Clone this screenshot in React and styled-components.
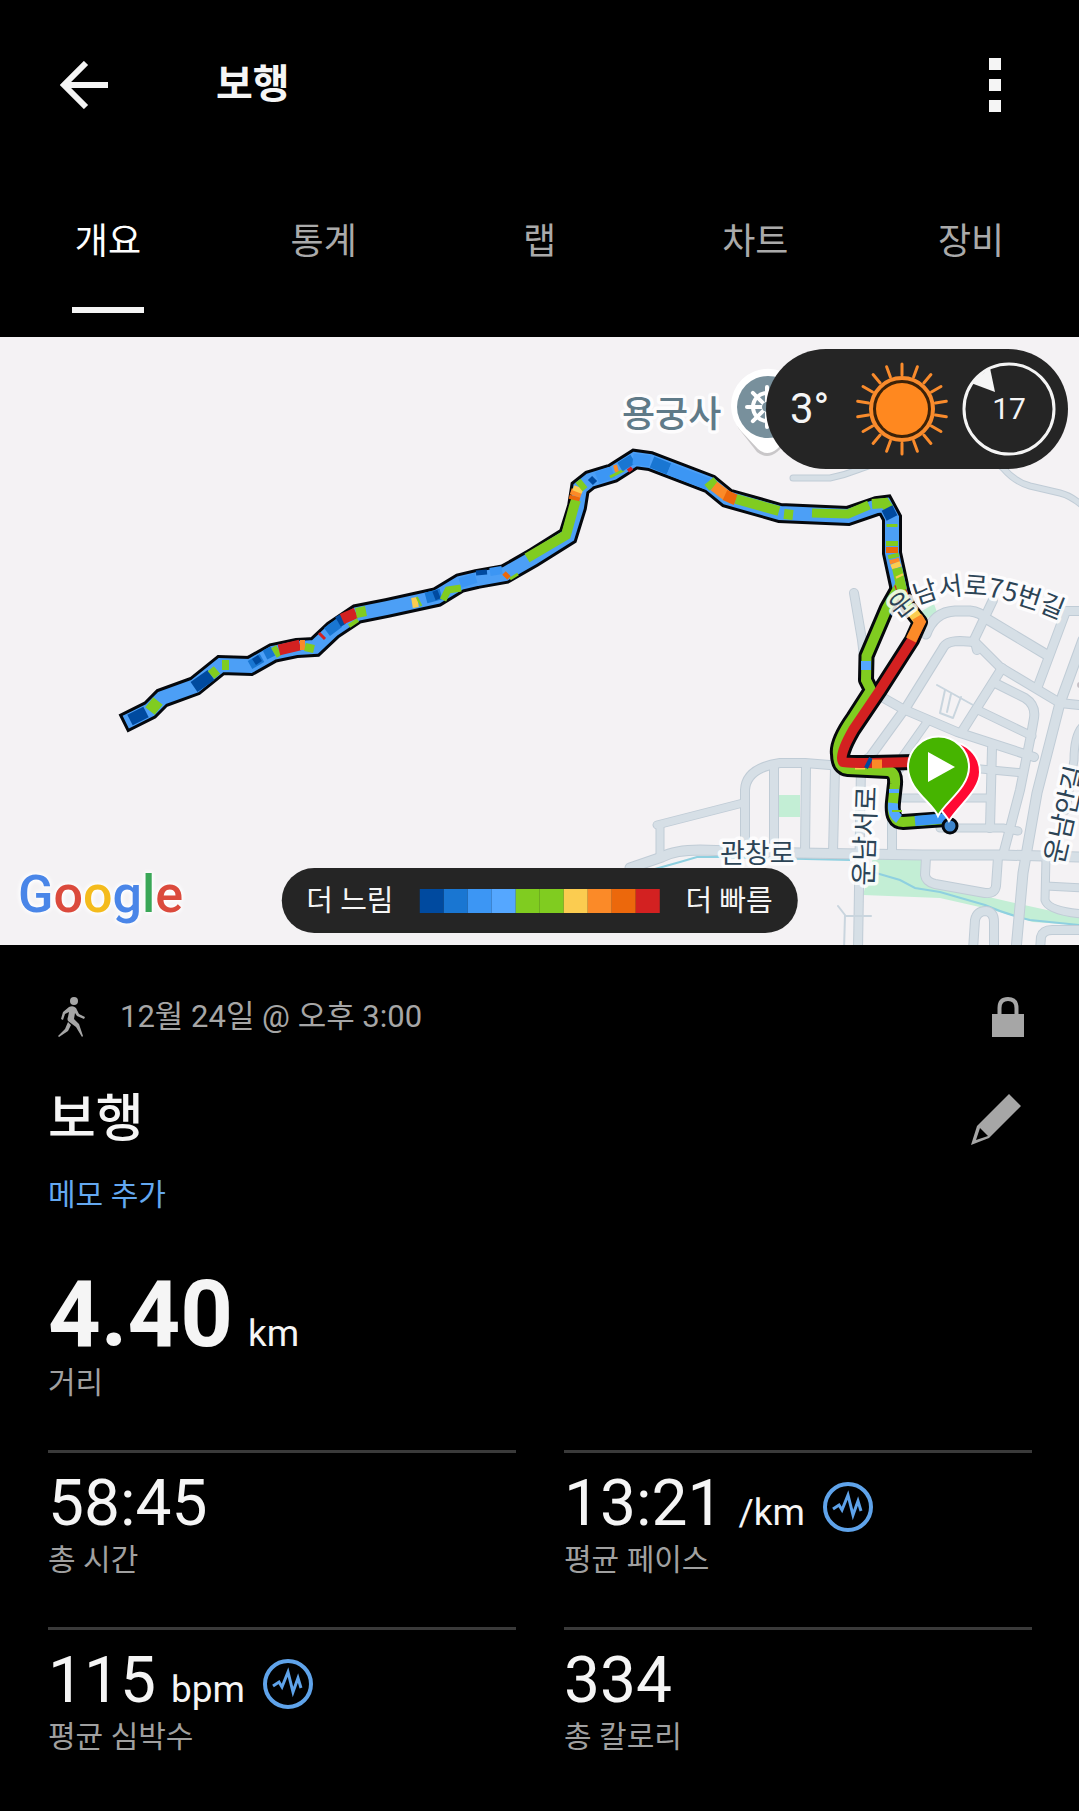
import React from "react";
import styled, { createGlobalStyle } from "styled-components";

const GlobalStyle = createGlobalStyle`
  *, *::before, *::after { box-sizing: border-box; }
  body {
    margin: 0;
    background: #000;
    color: #f5f5f5;
    font-family: Roboto, "Noto Sans CJK KR", sans-serif;
  }
  button {
    border: 0;
    padding: 0;
    background: none;
    color: inherit;
    font: inherit;
    cursor: pointer;
  }
  svg { display: block; }
`;

const Screen = styled.main`
  min-height: 100vh;
  background: #000;
`;

const Header = styled.header`
  display: flex;
  align-items: center;
  height: 170px;
  padding: 0 48px;
`;

const IconButton = styled.button`
  display: flex;
  align-items: center;
  justify-content: ${(p) => p.$align || "center"};
  width: 72px;
  height: 72px;
  color: ${(p) => p.$color || "#f5f5f5"};
`;

const HeaderTitle = styled.h1`
  flex: 1;
  margin: 0 0 0 96px;
  font-size: 40px;
  line-height: 56px;
  font-weight: 700;
`;

const Tabs = styled.nav`
  display: grid;
  grid-template-columns: repeat(5, 1fr);
  height: 167px;
`;

const Tab = styled.button`
  display: flex;
  flex-direction: column;
  align-items: center;
  justify-content: space-between;
  padding: 46px 0 24px;
  && {
    color: ${(p) => (p.$active ? "#fff" : "#aaa")};
    font-size: 36px;
    line-height: 52px;
  }
  &::after {
    content: "";
    width: 72px;
    height: 6px;
    background: ${(p) => (p.$active ? "#f5f5f5" : "transparent")};
  }
`;

const MapPanel = styled.section`
  position: relative;
  height: 608px;
  overflow: hidden;
  background: #f4f2f4;
`;

const MapCanvas = styled.svg`
  width: 100%;
  height: 100%;
`;

const MapText = styled.text`
  font-family: "Noto Sans CJK KR", sans-serif;
  font-size: ${(p) => p.$size || 27}px;
  font-weight: ${(p) => p.$weight || 400};
  fill: ${(p) => p.$color || "#2c4456"};
  stroke: rgba(255, 255, 255, 0.85);
  stroke-width: 7px;
  stroke-linejoin: round;
  paint-order: stroke;
`;

const WeatherPill = styled.div`
  position: absolute;
  top: 12px;
  right: 11px;
  display: flex;
  align-items: center;
  height: 120px;
  padding: 0 12px 0 24px;
  border-radius: 60px;
  background: #252525;
`;

const Temperature = styled.span`
  width: 64px;
  font-size: 42px;
  line-height: 48px;
`;

const Wind = styled.div`
  display: grid;
  place-items: center;
  margin-left: 12px;
  font-size: 30px;
  line-height: 36px;
  & > * { grid-area: 1 / 1; }
`;

const LegendPill = styled.div`
  position: absolute;
  bottom: 12px;
  left: 50%;
  transform: translateX(-50%);
  display: flex;
  align-items: center;
  gap: 26px;
  height: 65px;
  padding: 0 25px;
  border-radius: 33px;
  background: #252525;
  font-size: 29px;
  line-height: 40px;
  white-space: nowrap;
`;

const Scale = styled.div`
  display: flex;
`;

const Swatch = styled.span`
  width: 24px;
  height: 24px;
  background: ${(p) => p.$color};
`;

const GoogleMark = styled.span`
  position: absolute;
  left: 18px;
  bottom: 20px;
  font-size: 52px;
  line-height: 60px;
  font-weight: 500;
  filter: drop-shadow(0 0 2px #fff) drop-shadow(0 0 2px #fff);
`;

const Letter = styled.span`
  color: ${(p) => p.$color};
`;

const Details = styled.section`
  display: flex;
  flex-direction: column;
  padding: 48px 47px 48px 48px;
`;

const MetaRow = styled.div`
  display: flex;
  align-items: center;
  justify-content: space-between;
  height: 48px;
  color: #a6a6a6;
`;

const When = styled.div`
  display: flex;
  align-items: center;
  gap: 24px;
  font-size: 31px;
  line-height: 40px;
`;

const TitleRow = styled.div`
  display: flex;
  align-items: center;
  justify-content: space-between;
  margin-top: 47px;
  height: 64px;
`;

const ActivityTitle = styled.h2`
  margin: 0;
  font-size: 52px;
  line-height: 64px;
  font-weight: 500;
`;

const NoteLink = styled.a`
  align-self: flex-start;
  margin-top: 23px;
  color: #64a8f0;
  font-size: 30px;
  line-height: 40px;
  text-decoration: none;
`;

const Primary = styled.div`
  margin: 52px 0 47px;
`;

const Value = styled.div`
  display: flex;
  align-items: baseline;
  font-size: ${(p) => (p.$large ? 92 : 64)}px;
  line-height: ${(p) => (p.$large ? 96 : 72)}px;
  font-weight: ${(p) => (p.$large ? 700 : 400)};
`;

const Unit = styled.span`
  margin-left: 15px;
  font-size: 37px;
  line-height: 40px;
  font-weight: 400;
`;

const Label = styled.div`
  color: #a0a0a0;
  font-size: 30px;
  line-height: 40px;
`;

const Grid = styled.div`
  display: grid;
  grid-template-columns: 1fr 1fr;
  gap: 47px 48px;
`;

const Metric = styled.div`
  border-top: 3px solid #3a3a3a;
  padding-top: 15px;
`;

const PulseButton = styled.button`
  align-self: center;
  margin: 6px 0 0 18px;
`;

const speedColors = [
  "#004a9f", "#1976d2", "#3c96f4", "#55a7ff", "#80cc20",
  "#80cc20", "#fbcc50", "#fb8a28", "#ec680c", "#d32121",
];
const [NAVY, BLUE, AZURE, SKY, GREEN, , YELLOW, ORANGE, RUST, RED] = speedColors;

const roads = [
  ["M854 593L862 640L868 690", 8],
  ["M657 825L743 803", 7],
  ["M745 851V790Q746 768 780 763H805L842 766L900 768", 8],
  ["M774 766V850", 8],
  ["M806 766L805 853", 8],
  ["M835 768L833 853", 8],
  ["M660 825V857", 7],
  ["M630 868L662 857Q675 850 700 850L800 853L923 855H1003L1079 857", 9],
  ["M858 950L861 766Q864 760 870 757L907 706L943 648Q946 641 960 641L975 642L1000 667L1060 703L1079 705", 8],
  ["M926 634Q934 612 955 611H970Q980 612 987 619L1047 655", 9],
  ["M993 600L973 642", 8],
  ["M975 642L977 650", 8],
  ["M1079 611H1066L1038 686", 8],
  ["M880 696L903 709L957 732L1034 757", 8],
  ["M1002 668L961 733", 8],
  ["M995 683L1025 698Q1036 705 1034 718L1031 735L1020 790L1003 855", 8],
  ["M978 710L1032 736", 7],
  ["M1083 640L1060 703L1037 793L1023 873L1016 950", 9],
  ["M927 722L903 756", 7],
  ["M992 748L990 828", 8],
  ["M893 798H990", 7],
  ["M940 828H1003L1018 831", 7],
  ["M970 768L1023 773", 7],
  ["M892 822V855", 8],
  ["M926 857L925 875Q926 882 935 884L985 893Q995 894 996 886L998 857", 8],
  ["M973 950L975 920Q977 911 986 911Q994 912 994 922V950", 8],
  ["M1046 857L1045 900Q1048 911 1083 914", 7],
  ["M1046 886L1083 888", 7],
  ["M1040 950L1041 937Q1043 930 1052 930H1083", 8],
  ["M1083 726Q1074 735 1074 760L1066 810", 7],
  ["M793 478H830Q845 475 860 469L880 462", 5],
  ["M990 458L1003 468Q1015 482 1030 486L1060 493Q1072 496 1084 507", 5],
];

const lanes = [
  "M937 685L973 705", "M945 690L940 713L953 718L961 697",
  "M951 694L947 712", "M838 906L845 915L844 950", "M845 916H871",
];

const track =
  "M132 719L150 710L162 698L195 686L221 665L250 666L273 653L297 648L315 647L333 630L357 614L387 608L437 597L460 583L477 579L505 574L533 558L568 536L577 507L580 488L590 480L613 473L635 459L650 461L710 484L727 498L780 513L848 516L877 506L885 505L892 518L892 553L900 590";
const greenLeg = "M900 585L887 608L866.500 656L866 680L871 690L853 718Q836 742 838 754Q838 768 848 769L888 771Q896 772 895 784L893 802Q891 822 903 822L946 819";
const redLeg = "M899 584L908 607L920 622L912 640L880 690L853 730Q838 756 843 762Q846 763 873 763L915 762";

const trackParts = [
  [NAVY, "M130 720L146 712", 12], [GREEN, "M150 711L158 701", 12],
  [NAVY, "M194 687L211 675", 12], [GREEN, "M211 675L217 670", 10],
  [GREEN, "M222 665H229", 10], [BLUE, "M250 665L262 658", 9], [NAVY, "M254 662L260 658", 7],
  [BLUE, "M265 655L273 651", 10], [GREEN, "M274 653L279 650", 11],
  [RED, "M279 650L300 645", 11], [ORANGE, "M300 645L305 645", 10], [GREEN, "M305 647L314 649", 8],
  [RED, "M319 633L325 639", 3], [BLUE, "M327 632L339 623", 10], [NAVY, "M338 622L343 619", 11],
  [RED, "M342 619L356 613", 11], [GREEN, "M356 613L366 611", 10], [GREEN, "M349 626L358 620", 4],
  [YELLOW, "M412 603L418 602", 10], [GREEN, "M418 602L420 601", 10],
  [BLUE, "M426 598L441 594", 11], [NAVY, "M434 596L439 594", 9],
  [GREEN, "M443 600L448 590L461 588", 7], [AZURE, "M460 583L476 578", 10],
  [NAVY, "M476 573L487 572", 5], [AZURE, "M490 572L502 570", 8],
  [RUST, "M504 573L509 578", 5], [GREEN, "M510 579L518 574", 3],
  [GREEN, "M527 558L566 535L574 506L576 500", 10],
  [RUST, "M574 500L575 496", 11], [ORANGE, "M575 496L577 490", 11], [YELLOW, "M577 492L579 487", 10],
  [GREEN, "M579 487L584 483", 11], [NAVY, "M590 478L595 483", 6],
  [AZURE, "M597 478L613 472", 12], [ORANGE, "M615 465L617 472", 4], [GREEN, "M610 477L624 470", 3],
  [BLUE, "M620 467L633 459", 10], [RED, "M628 471L632 468", 4],
  [AZURE, "M633 459L650 461", 11], [BLUE, "M652 462L669 469", 12], [AZURE, "M669 469L708 484", 12],
  [GREEN, "M709 481L714 487", 12], [ORANGE, "M714 486L727 496", 11], [RUST, "M725 495L736 500", 11],
  [GREEN, "M736 499L779 511", 10], [GREEN, "M784 514L793 515", 10], [GREEN, "M812 513L848 514L869 505", 9],
  [GREEN, "M872 504L885 503L889 509", 10], [NAVY, "M887 508L892 518", 12],
  [GREEN, "M892 524V527", 11], [GREEN, "M892 541V546", 12], [RUST, "M892 547V553", 12],
  [GREEN, "M893 554L894 558", 11], [ORANGE, "M894 559L895 563", 10], [YELLOW, "M895 563L897 568", 10],
  [GREEN, "M897 568L902 590", 10], [YELLOW, "M899 575L900 577", 8],
];

const legParts = [
  [SKY, "M866 661V670", 10], [YELLOW, "M855 768H865", 3],
  [SKY, "M894 789V793", 10], [SKY, "M893 803Q892 814 899 819", 10], [GREEN, "M892 811L902 811", 2],
  [AZURE, "M915 821L948 818", 10],
];

const weatherRays = Array.from({ length: 18 }, (_, i) => i * 20);

function MapDrawing() {
  return (
    <MapCanvas viewBox="0 337 1079 608" preserveAspectRatio="xMidYMid slice" role="img" aria-label="경로 지도">
      <g fill="#c3eed5">
        <path d="M779 795h21v22h-21z" />
        <path d="M920 612L934 604L937 612L925 620z" />
        <path d="M873 858H922L928 883L1006 901L1079 917V925L1033 922L993 910L940 898L863 895z" />
      </g>
      <g fill="none" stroke="#8fd0e0" strokeWidth="2">
        <path d="M655 869L680 862L697 857L720 857L850 860" />
        <path d="M876 873L900 880L915 888L940 892L985 905Q1005 914 1030 920L1079 925" />
      </g>
      <g fill="none" strokeLinecap="round" strokeLinejoin="round">
        {roads.map(([d, w]) => <path key={d} d={d} stroke="#c0ccd6" strokeWidth={w + 2} />)}
        {roads.map(([d, w]) => <path key={d} d={d} stroke="#d6dfe6" strokeWidth={w} />)}
        {lanes.map((d) => <path key={d} d={d} stroke="#c9d5de" strokeWidth="2" />)}
      </g>
      <circle cx="1080" cy="685" r="3" fill="#c5bfc5" />

      <g fill="none" stroke="#05080c" strokeLinejoin="round">
        <path d={track} strokeWidth="20" strokeLinecap="square" strokeLinejoin="miter" />
        <path d={greenLeg} strokeWidth="16" />
        <path d={redLeg} strokeWidth="16" />
      </g>
      <g fill="none">
        <path d={track} stroke="#4c9ff6" strokeWidth="14" strokeLinecap="square" />
        <path d={greenLeg} stroke={GREEN} strokeWidth="10" />
        {legParts.map(([c, d, w]) => <path key={d} d={d} stroke={c} strokeWidth={w} />)}
        <path d={redLeg} stroke={RED} strokeWidth="10" />
        <path d="M900 590L908 607L912 611" stroke={GREEN} strokeWidth="10" />
        <path d="M911 610L920 622" stroke={YELLOW} strokeWidth="11" />
        <path d="M917 617L920 622L911 640" stroke={ORANGE} strokeWidth="11" />
        <path d="M866 768L871 758" stroke={NAVY} strokeWidth="4" />
        <path d="M872 764L882 764" stroke={ORANGE} strokeWidth="9" />
        {trackParts.map(([c, d, w]) => <path key={d} d={d} stroke={c} strokeWidth={w} />)}
      </g>

      <g>
        <circle cx="950" cy="826" r="7" fill="#3d85cc" stroke="#05080c" strokeWidth="3" />
        <path d="M949 821C942 807 920 796 920 772A30 30 0 0 1 980 772C980 790 960 804 949 821Z" fill="#ff0a33" stroke="#fff" strokeWidth="2" />
        <path d="M938 816C932 802 908 790 908 767A30.500 30.500 0 0 1 969 767C969 788 945 802 938 816Z" fill="#46b400" stroke="#fff" strokeWidth="2" />
        <path d="M928 752L955 767L928 782Z" fill="#fff" />
      </g>

      <g>
        <path d="M743 431A37 37 0 1 1 797 431L777 449Q767 457 757 449Z" fill="#777" opacity="0.35" transform="translate(0 3)" />
        <path d="M741 431A37 37 0 1 1 795 431L777 449Q767 457 758 449Z" fill="#fff" />
        <circle cx="768" cy="407" r="31" fill="#78909c" />
        <g fill="none" stroke="#fff" strokeWidth="4" strokeLinecap="round">
          <circle cx="767" cy="407" r="14" />
          {[0, 45, 90, 135].map((a) => <path key={a} d="M767 387V427" transform={`rotate(${a} 767 407)`} />)}
        </g>
        <circle cx="767" cy="407" r="5" fill="#78909c" />
      </g>

      <MapText x="622" y="427" $size={36} $color="#5f7a88" $weight={500}>용궁사</MapText>
      <path id="lane75" d="M898 620Q915 603 935 599Q970 589 1015 603Q1040 610 1070 624" fill="none" />
      <MapText $size={26}><textPath href="#lane75">운남서로75번길</textPath></MapText>
      <MapText x="720" y="863">관창로</MapText>
      <MapText transform="translate(873 886) rotate(-88)">운남서로</MapText>
      <MapText transform="translate(1063 865) rotate(-77)">운남안길</MapText>
    </MapCanvas>
  );
}

function PulseIcon() {
  return (
    <svg width="50" height="50" viewBox="0 0 50 50" fill="none" stroke="#5fa3ea">
      <circle cx="25" cy="25" r="23" strokeWidth="4" />
      <path d="M10 27L16 23L19 28L25 13L30 33L35 19L38 29" strokeWidth="3" />
    </svg>
  );
}

function MetricCell({ value, unit, label, pulse }) {
  return (
    <Metric>
      <Value>
        {value}
        {unit && <Unit>{unit}</Unit>}
        {pulse && <PulseButton aria-label={`${label} 차트`}><PulseIcon /></PulseButton>}
      </Value>
      <Label>{label}</Label>
    </Metric>
  );
}

const tabs = ["개요", "통계", "랩", "차트", "장비"];
const logo = [["G", "#4a86e8"], ["o", "#db4a3c"], ["o", "#f4bb1c"], ["g", "#4a86e8"], ["l", "#3aa757"], ["e", "#db4a3c"]];

export default function App() {
  const [active, setActive] = React.useState(tabs[0]);
  return (
    <Screen>
      <GlobalStyle />
      <Header>
        <IconButton aria-label="뒤로">
          <svg width="48" height="48" viewBox="0 0 48 48" fill="none" stroke="currentColor" strokeWidth="6">
            <path d="M26 2L4 24L26 46M4 24H48" />
          </svg>
        </IconButton>
        <HeaderTitle>보행</HeaderTitle>
        <IconButton aria-label="더보기">
          <svg width="12" height="54" viewBox="0 0 12 54" fill="currentColor">
            <path d="M0 0h12v12H0zM0 21h12v12H0zM0 42h12v12H0z" />
          </svg>
        </IconButton>
      </Header>
      <Tabs>
        {tabs.map((t) => (
          <Tab key={t} $active={t === active} onClick={() => setActive(t)}>{t}</Tab>
        ))}
      </Tabs>

      <MapPanel>
        <MapDrawing />
        <GoogleMark>
          {logo.map(([ch, c], i) => <Letter key={i} $color={c}>{ch}</Letter>)}
        </GoogleMark>
        <WeatherPill>
          <Temperature>3°</Temperature>
          <svg width="96" height="96" viewBox="-48 -48 96 96" fill="none" stroke="#f98b2c">
            {weatherRays.map((a) => (
              <path key={a} d="M0 -34V-45" strokeWidth="3" strokeLinecap="round" transform={`rotate(${a})`} />
            ))}
            <circle r="31" strokeWidth="4" fill="#3d2208" />
            <circle r="26" fill="#ff881f" stroke="none" />
          </svg>
          <Wind>
            <svg width="94" height="94" viewBox="-47 -47 94 94" fill="none" stroke="#f5f5f5">
              <circle r="45" strokeWidth="3" />
              <path d="M-19 -41L-14 -17L-38 -26Z" fill="#f5f5f5" stroke="none" />
            </svg>
            <span>17</span>
          </Wind>
        </WeatherPill>
        <LegendPill>
          <span>더 느림</span>
          <Scale>
            {speedColors.map((c, i) => <Swatch key={i} $color={c} />)}
          </Scale>
          <span>더 빠름</span>
        </LegendPill>
      </MapPanel>

      <Details>
        <MetaRow>
          <When>
            <svg width="48" height="48" viewBox="0 0 48 48" fill="currentColor">
              <circle cx="26" cy="8" r="4" />
              <path d="M21 14Q25 12 28 15L31 21L37 24L36 26L29 23L27 20L26 26L31 31L35 43L34 44L28 34L20 28Q19 26 20 24L21 19L17 21L15 27L13 26L15 19Z" />
              <path d="M20 29L23 32L20 38L11 44L10 43L17 36Z" />
            </svg>
            <span>12월 24일 @ 오후 3:00</span>
          </When>
          <svg width="48" height="48" viewBox="0 0 48 48" fill="currentColor">
            <path d="M8 21h32v23H8z" />
            <path d="M15.500 22V15Q15.500 6 24 6Q32.500 6 32.500 15V22" fill="none" stroke="currentColor" strokeWidth="4" />
          </svg>
        </MetaRow>
        <TitleRow>
          <ActivityTitle>보행</ActivityTitle>
          <IconButton aria-label="편집" $color="#a6a6a6" $align="center">
            <svg width="60" height="60" viewBox="0 0 60 60" fill="currentColor" fillRule="evenodd">
              <path d="M43 4L55 16L23 48L5 55L11 36ZM14 38L10 50L22 46Z" />
            </svg>
          </IconButton>
        </TitleRow>
        <NoteLink href="#note">메모 추가</NoteLink>
        <Primary>
          <Value $large>4.40<Unit>km</Unit></Value>
          <Label>거리</Label>
        </Primary>
        <Grid>
          <MetricCell value="58:45" label="총 시간" />
          <MetricCell value="13:21" unit="/km" label="평균 페이스" pulse />
          <MetricCell value="115" unit="bpm" label="평균 심박수" pulse />
          <MetricCell value="334" label="총 칼로리" />
        </Grid>
      </Details>
    </Screen>
  );
}
